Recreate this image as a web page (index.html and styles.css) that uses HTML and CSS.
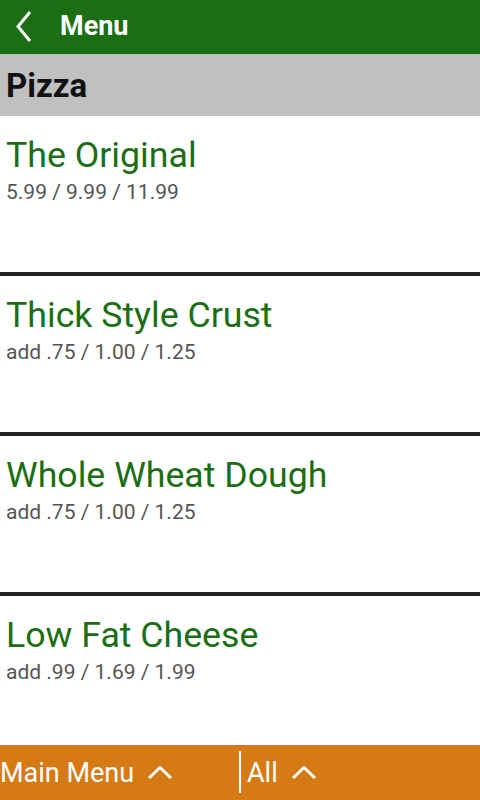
FILE: index.html
```html
<!DOCTYPE html>
<html>
<head>
<meta charset="utf-8">
<title>Menu</title>
<link rel="stylesheet" href="styles.css">
</head>
<body>

<div class="app">
  <div class="topbar">
    <svg class="back" width="40" height="54" viewBox="0 0 40 54">
      <polyline points="30,12 18,26.5 30,41" fill="none" stroke="#fff" stroke-width="3"/>
    </svg>
    <span class="topbar-title">Menu</span>
  </div>

  <div class="category">Pizza</div>

  <div class="items">
    <div class="item">
      <div class="item-name">The Original</div>
      <div class="item-price">5.99 / 9.99 / 11.99</div>
    </div>
    <div class="item">
      <div class="item-name">Thick Style Crust</div>
      <div class="item-price">add .75 / 1.00 / 1.25</div>
    </div>
    <div class="item">
      <div class="item-name">Whole Wheat Dough</div>
      <div class="item-price">add .75 / 1.00 / 1.25</div>
    </div>
    <div class="item">
      <div class="item-name">Low Fat Cheese</div>
      <div class="item-price">add .99 / 1.69 / 1.99</div>
    </div>
  </div>

  <div class="footer">
    <div class="footer-tab tab-left">
      <span>Main Menu</span>
      <svg class="up" width="26" height="16" viewBox="0 0 26 16">
        <polyline points="2,13 13,2.5 24,13" fill="none" stroke="#fff" stroke-width="3"/>
      </svg>
    </div>
    <div class="footer-divider"></div>
    <div class="footer-tab tab-right">
      <span>All</span>
      <svg class="up" width="26" height="16" viewBox="0 0 26 16">
        <polyline points="2,13 13,2.5 24,13" fill="none" stroke="#fff" stroke-width="3"/>
      </svg>
    </div>
  </div>
</div>

</body>
</html>
```

FILE: styles.css
```css
body {
  margin: 0;
  font-family: Roboto, "Liberation Sans", sans-serif;
}

.app {
  height: 800px;
  display: flex;
  flex-direction: column;
  overflow: hidden;
}

.topbar {
  height: 54px;
  flex: none;
  display: flex;
  align-items: center;
  background: #1b6e13;
  color: #ffffff;
}

.back {
  display: block;
  margin-right: 20px;
}

.topbar-title {
  font-weight: bold;
  font-size: 27px;
  padding-bottom: 2px;
}

.category {
  height: 62px;
  flex: none;
  display: flex;
  align-items: center;
  padding: 0 6px;
  background: #c0c0c0;
  color: #111111;
  font-weight: bold;
  font-size: 33px;
}

.items {
  flex: 1;
  overflow: hidden;
}

.item {
  height: 160px;
  box-sizing: border-box;
  padding: 18px 6px 0 6px;
  border-bottom: 4px solid #222222;
}

.item-name {
  font-size: 35.7px;
  line-height: 42px;
  color: #1b6e13;
}

.item-price {
  margin-top: 4px;
  font-size: 21px;
  line-height: 25px;
  color: #555555;
}

.footer {
  height: 55px;
  flex: none;
  display: flex;
  align-items: center;
  background: #d67a15;
  color: #ffffff;
  font-size: 27px;
}

.footer-tab {
  display: flex;
  align-items: center;
  gap: 13px;
}

.tab-left {
  width: 239px;
}

.tab-right {
  flex: 1;
  padding-left: 6px;
}

.up {
  display: block;
}

.footer-divider {
  width: 2px;
  height: 42px;
  background: #ffffff;
  margin-top: -2px;
}
```
